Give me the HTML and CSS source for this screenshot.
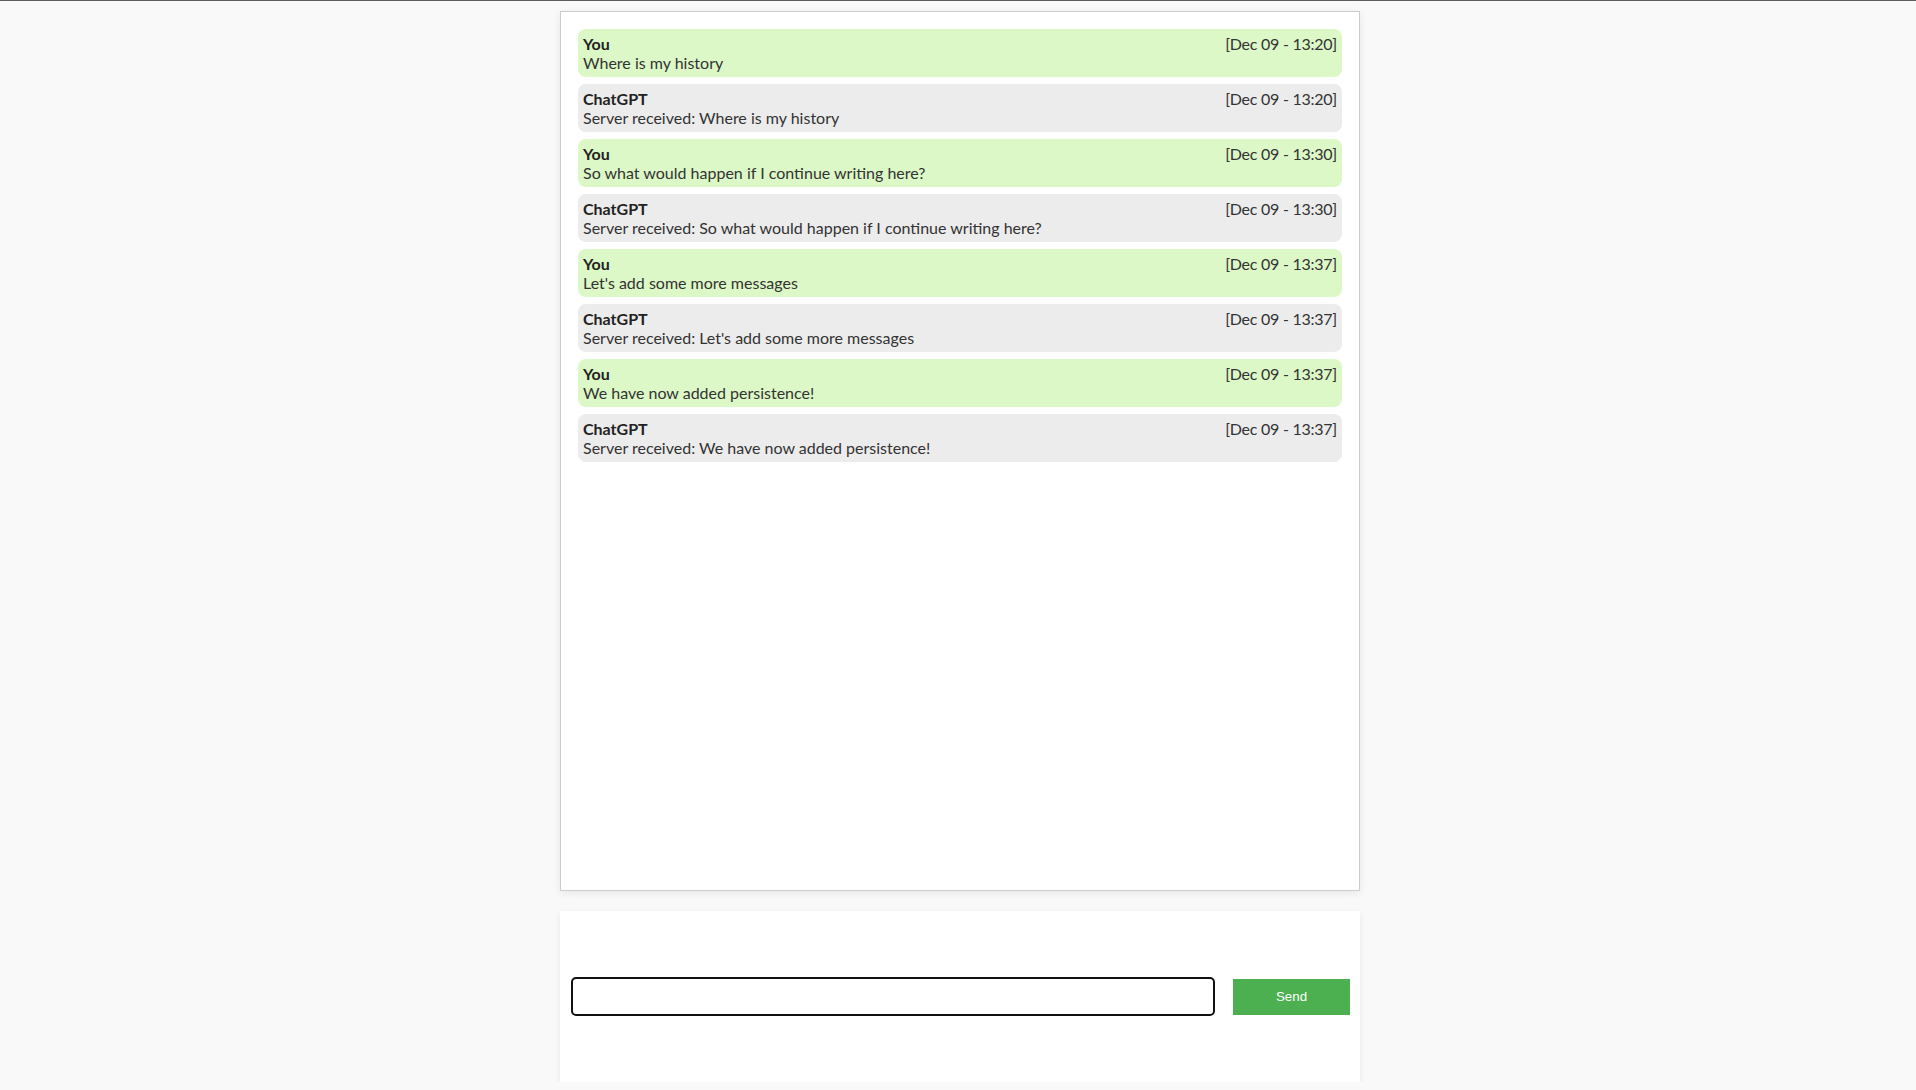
FILE: index.html
```html
<!DOCTYPE html>
<html>
<head>
<meta charset="utf-8">
<title>Chat</title>
<link rel="stylesheet" href="styles.css">
</head>
<body>
<div class="topline"></div>
<main class="page">
  <section class="chat">
    <div class="msg user">
      <div class="msg-head"><span class="name">You</span><span class="time">[Dec 09 - 13:20]</span></div>
      <div class="text">Where is my history</div>
    </div>
    <div class="msg bot">
      <div class="msg-head"><span class="name">ChatGPT</span><span class="time">[Dec 09 - 13:20]</span></div>
      <div class="text">Server received: Where is my history</div>
    </div>
    <div class="msg user">
      <div class="msg-head"><span class="name">You</span><span class="time">[Dec 09 - 13:30]</span></div>
      <div class="text">So what would happen if I continue writing here?</div>
    </div>
    <div class="msg bot">
      <div class="msg-head"><span class="name">ChatGPT</span><span class="time">[Dec 09 - 13:30]</span></div>
      <div class="text">Server received: So what would happen if I continue writing here?</div>
    </div>
    <div class="msg user">
      <div class="msg-head"><span class="name">You</span><span class="time">[Dec 09 - 13:37]</span></div>
      <div class="text">Let's add some more messages</div>
    </div>
    <div class="msg bot">
      <div class="msg-head"><span class="name">ChatGPT</span><span class="time">[Dec 09 - 13:37]</span></div>
      <div class="text">Server received: Let's add some more messages</div>
    </div>
    <div class="msg user">
      <div class="msg-head"><span class="name">You</span><span class="time">[Dec 09 - 13:37]</span></div>
      <div class="text">We have now added persistence!</div>
    </div>
    <div class="msg bot">
      <div class="msg-head"><span class="name">ChatGPT</span><span class="time">[Dec 09 - 13:37]</span></div>
      <div class="text">Server received: We have now added persistence!</div>
    </div>
  </section>
  <form class="composer">
    <input class="input" type="text">
    <button class="send" type="button">Send</button>
  </form>
</main>
</body>
</html>
```
FILE: styles.css
```css
html, body {
  margin: 0;
  padding: 0;
  background: #f9f9f9;
}
body {
  font-family: Lato, "Liberation Sans", sans-serif;
  color: #333;
}
.topline {
  height: 1px;
  background: #5c5c5c;
}
.page {
  display: flex;
  flex-direction: column;
  align-items: center;
  padding-left: 4px;
  padding-top: 10px;
}
.chat {
  box-sizing: border-box;
  width: 800px;
  height: 880px;
  background: #fff;
  border: 1px solid #cccccc;
  box-shadow: 0 2px 8px rgba(0, 0, 0, 0.08);
  padding: 17px;
  display: flex;
  flex-direction: column;
  gap: 7px;
  overflow-y: auto;
}
.msg {
  border-radius: 8px;
  padding: 5px;
  font-size: 16px;
  line-height: 19px;
}
.msg.user {
  background: #dcf8c6;
}
.msg.bot {
  background: #ececec;
}
.msg-head {
  display: flex;
  justify-content: space-between;
}
.name {
  font-weight: 700;
  color: #222;
}
.time {
  color: #333;
  letter-spacing: -0.25px;
}
.composer {
  box-sizing: border-box;
  width: 800px;
  height: 171px;
  margin: 20px 0 0 0;
  background: #fff;
  box-shadow: 0 2px 6px rgba(0, 0, 0, 0.08);
  display: flex;
  align-items: center;
  gap: 18px;
  padding: 0 10px 0 11px;
}
.input {
  box-sizing: border-box;
  flex: 1;
  height: 39px;
  border: 2px solid #111;
  border-radius: 5px;
  padding: 0 8px;
  font-size: 16px;
  outline: none;
}
.send {
  box-sizing: border-box;
  width: 117px;
  height: 36px;
  background: #4caf50;
  color: #fff;
  border: none;
  font-family: "Liberation Sans", Arial, sans-serif;
  font-size: 13.33px;
  cursor: pointer;
}
```
